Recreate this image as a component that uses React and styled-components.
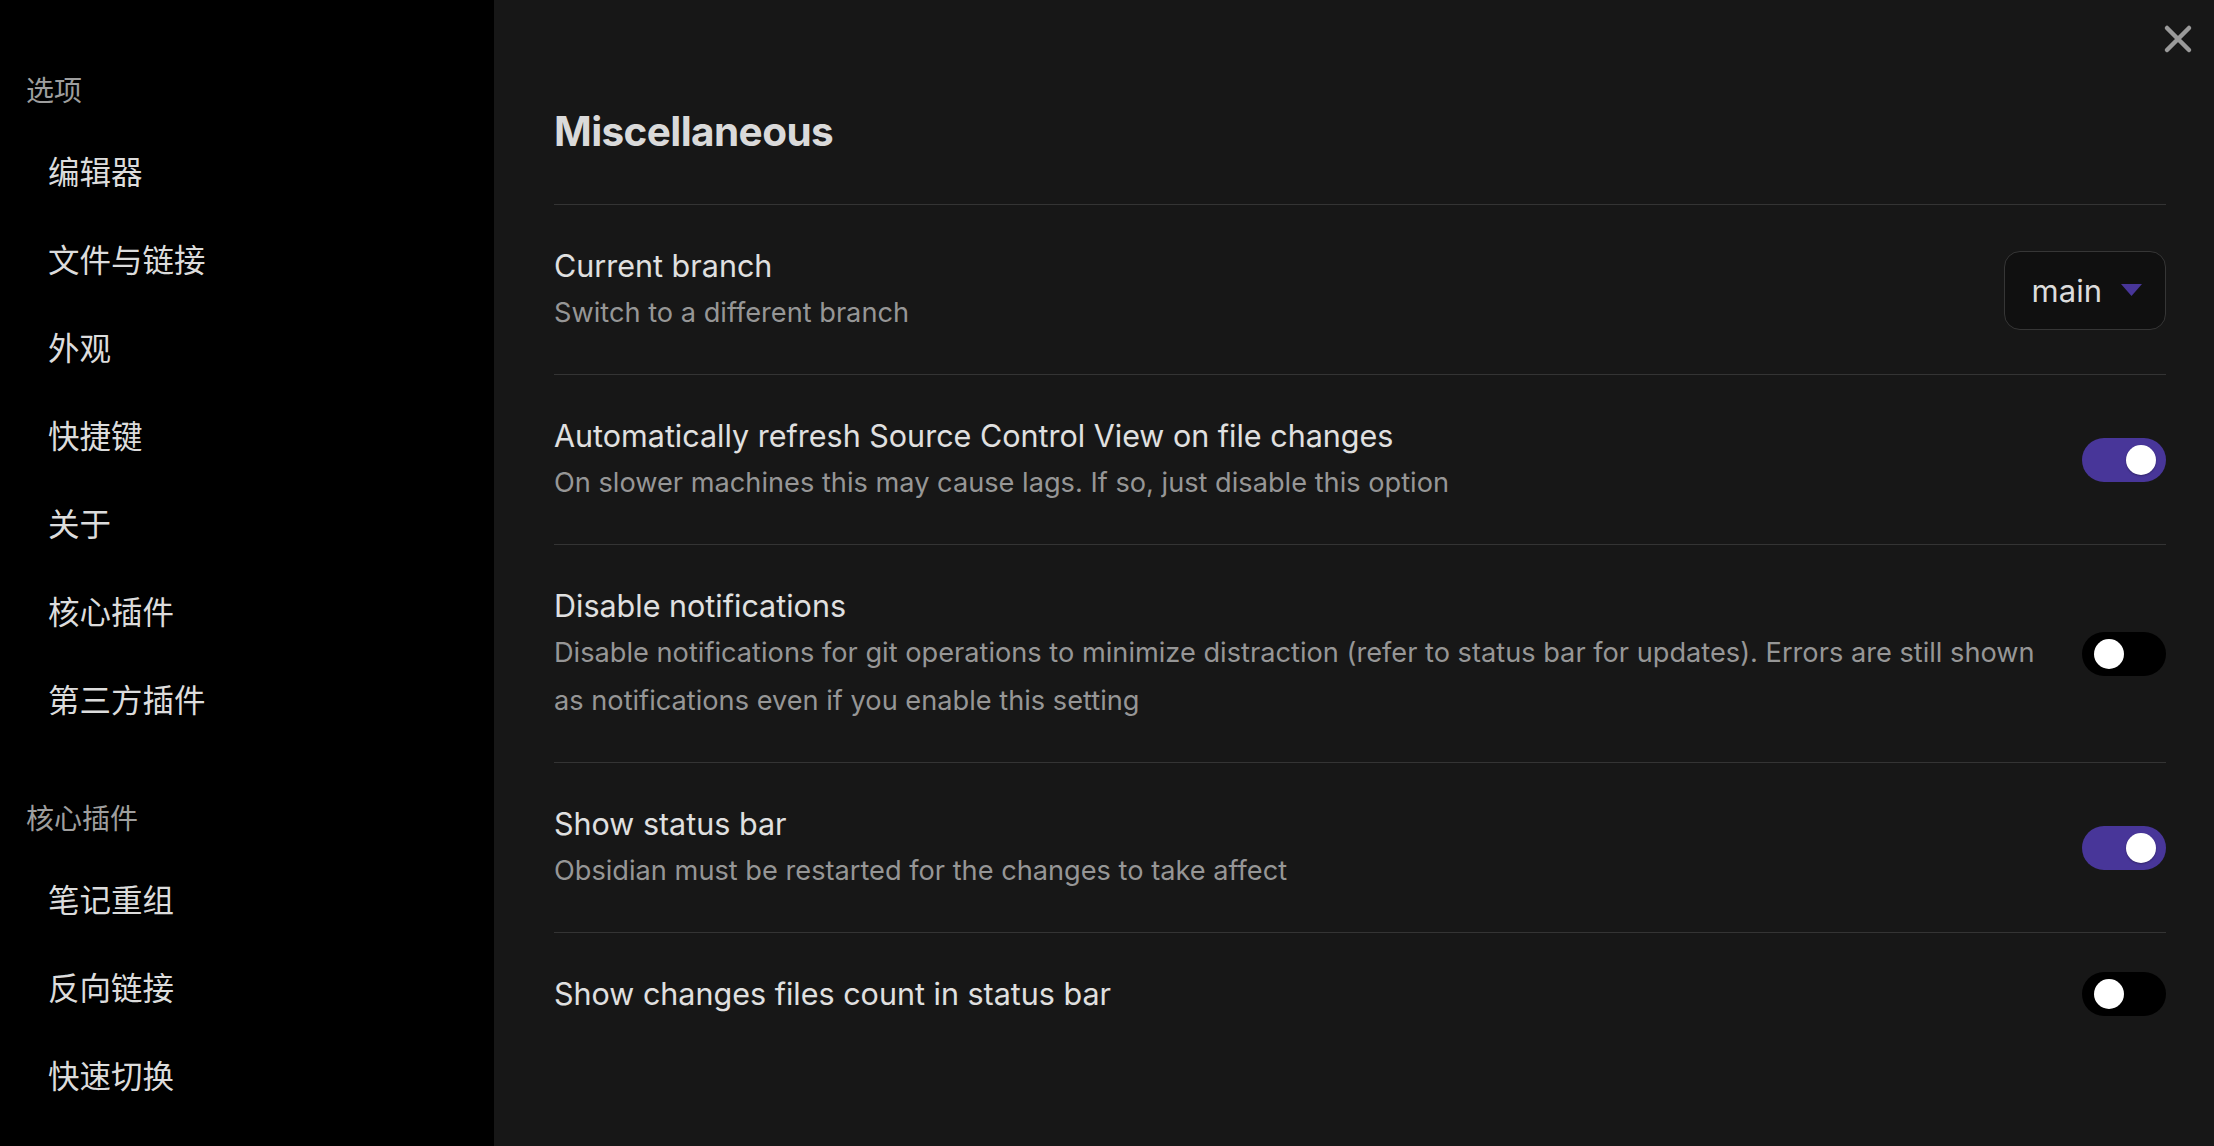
import React from "react";
import styled, { createGlobalStyle } from "styled-components";

const GlobalStyle = createGlobalStyle`
  html, body {
    margin: 0;
    padding: 0;
    background: #171717;
  }
  body {
    font-family: "Inter", "Noto Sans CJK SC", sans-serif;
    -webkit-font-smoothing: antialiased;
  }
  * { box-sizing: border-box; }
`;

const Layout = styled.div`
  display: flex;
  width: 100%;
  height: 100vh;
  overflow: hidden;
  position: relative;
`;

const Sidebar = styled.nav`
  width: 494px;
  flex: none;
  background: #000;
  display: flex;
  flex-direction: column;
  padding-top: 14px;
  overflow: hidden;
`;

const SectionHeader = styled.div`
  font-family: "Inter", "Noto Sans CJK SC", sans-serif;
  font-size: 28px;
  line-height: 40px;
  color: #9e9e9e;
  padding-left: 26px;
  margin: 57px 0 15px;
`;

const NavItem = styled.div`
  height: 88px;
  flex: none;
  display: flex;
  align-items: center;
  padding-left: 48px;
  font-family: "Inter", "Noto Sans CJK SC", sans-serif;
  font-size: 31.5px;
  color: #dcdcdc;
`;

const Main = styled.main`
  flex: 1;
  min-width: 0;
  background: #171717;
  padding: 107px 48px 0 60px;
`;

const Title = styled.h2`
  margin: 0 0 47px;
  font-size: 40.5px;
  line-height: 50px;
  font-weight: 700;
  letter-spacing: -0.6px;
  color: #dadada;
`;

const Row = styled.div`
  display: flex;
  align-items: center;
  gap: 20px;
  border-top: 1px solid #343434;
  padding: 38px 0 37px;
`;

const Info = styled.div`
  flex: 1;
  min-width: 0;
`;

const Name = styled.div`
  font-size: 30.5px;
  line-height: 46px;
  color: #e0e0e0;
`;

const Desc = styled.div`
  font-size: 27.2px;
  line-height: 48px;
  color: #969696;
`;

const Select = styled.div`
  height: 79px;
  display: flex;
  align-items: center;
  gap: 19px;
  padding: 0 23px 0 27px;
  border: 1.5px solid #363636;
  border-radius: 16px;
  background: #101010;
  font-size: 31px;
  color: #dcdcdc;
  flex: none;
`;

const Toggle = styled.div`
  width: 84px;
  height: 44px;
  flex: none;
  border-radius: 22px;
  background: ${(p) => (p.$on ? "#483699" : "#000")};
  display: flex;
  align-items: center;
  justify-content: ${(p) => (p.$on ? "flex-end" : "flex-start")};
  padding: ${(p) => (p.$on ? "0 10px" : "0 12px")};
`;

const Knob = styled.div`
  width: 30px;
  height: 30px;
  border-radius: 50%;
  background: #fff;
  box-shadow: 0 1px 2px rgba(0, 0, 0, 0.3);
`;

const CloseButton = styled.button`
  position: absolute;
  top: 24px;
  right: 21px;
  width: 30px;
  height: 30px;
  padding: 0;
  border: none;
  background: transparent;
  color: #9a9a9a;
  display: flex;
  align-items: center;
  justify-content: center;
`;

const topItems = ["编辑器", "文件与链接", "外观", "快捷键", "关于", "核心插件", "第三方插件"];
const pluginItems = ["笔记重组", "反向链接", "快速切换"];

const settings = [
  {
    name: "Current branch",
    desc: "Switch to a different branch",
    control: "select",
  },
  {
    name: "Automatically refresh Source Control View on file changes",
    desc: "On slower machines this may cause lags. If so, just disable this option",
    control: "toggle",
    on: true,
  },
  {
    name: "Disable notifications",
    desc:
      "Disable notifications for git operations to minimize distraction (refer to status bar for updates). Errors are still shown as notifications even if you enable this setting",
    control: "toggle",
    on: false,
  },
  {
    name: "Show status bar",
    desc: "Obsidian must be restarted for the changes to take affect",
    control: "toggle",
    on: true,
  },
  {
    name: "Show changes files count in status bar",
    control: "toggle",
    on: false,
  },
];

export default function App() {
  return (
    <>
      <GlobalStyle />
      <Layout>
        <Sidebar>
          <SectionHeader>选项</SectionHeader>
          {topItems.map((t) => (
            <NavItem key={t}>{t}</NavItem>
          ))}
          <SectionHeader>核心插件</SectionHeader>
          {pluginItems.map((t) => (
            <NavItem key={t}>{t}</NavItem>
          ))}
        </Sidebar>
        <Main>
          <Title>Miscellaneous</Title>
          {settings.map((s) => (
            <Row key={s.name}>
              <Info>
                <Name>{s.name}</Name>
                {s.desc && <Desc>{s.desc}</Desc>}
              </Info>
              {s.control === "select" ? (
                <Select>
                  <span>main</span>
                  <svg width="21" height="12" viewBox="0 0 21 12">
                    <path d="M0 0 H21 L10.5 12 Z" fill="#483699" />
                  </svg>
                </Select>
              ) : (
                <Toggle $on={s.on}>
                  <Knob />
                </Toggle>
              )}
            </Row>
          ))}
        </Main>
        <CloseButton aria-label="Close">
          <svg width="30" height="30" viewBox="0 0 30 30">
            <path
              d="M4 4 L26 26 M26 4 L4 26"
              stroke="currentColor"
              strokeWidth="4.5"
              strokeLinecap="round"
            />
          </svg>
        </CloseButton>
      </Layout>
    </>
  );
}
